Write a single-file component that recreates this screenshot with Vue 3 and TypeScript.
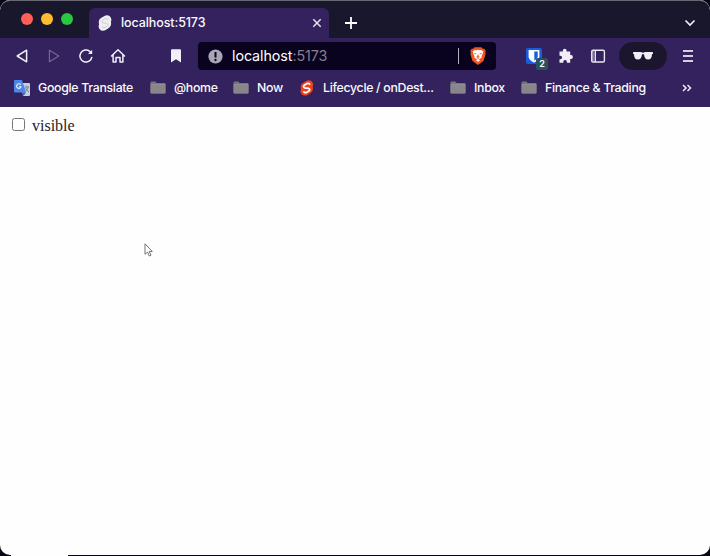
<script setup lang="ts">
import { ref } from 'vue'

interface Bookmark {
  label: string
  icon: 'translate' | 'folder' | 'svelte'
  width: number
}

const visible = ref(false)

const bookmarks: Bookmark[] = [
  { label: 'Google Translate', icon: 'translate', width: 95 },
  { label: '@home', icon: 'folder', width: 42 },
  { label: 'Now', icon: 'folder', width: 25 },
  { label: 'Lifecycle / onDest...', icon: 'svelte', width: 110 },
  { label: 'Inbox', icon: 'folder', width: 30 },
  { label: 'Finance & Trading', icon: 'folder', width: 102 },
]
</script>

<template>
  <div class="desktop">
    <div class="window">
      <header class="tabstrip">
        <div class="lights">
          <i class="light red"></i>
          <i class="light yellow"></i>
          <i class="light green"></i>
        </div>
        <div class="tab">
          <svg class="favicon" width="14" height="16" viewBox="0 0 14 16">
            <path d="M6 1.2C8.500-.5 11.500.2 12.700 2.400C13.700 4 13.500 5.400 12.900 6.600C13.500 9.500 12.900 11.600 10.800 13L7.700 15C5.300 16.400 2.500 15.600 1.200 13.400C.4 12 .4 10.700 1.100 9.400C.3 6.800 1 4.400 3 3.100Z" fill="#eeedf1" />
            <path d="M10.200 4.900C9.500 3.300 7.900 3.200 6.800 3.900L4.600 5.300C3.300 6.200 3.500 7.600 4.900 7.900L8.700 8.500C10.200 8.900 10.300 10.300 9.100 11.100L7 12.400C5.700 13.200 4.300 12.700 3.800 11.300" fill="none" stroke="#cfccd6" stroke-width="1" />
          </svg>
          <span class="tab-title">localhost:5173</span>
          <svg class="close" width="10" height="10" viewBox="0 0 10 10"><path d="M1.300 1.300L8.700 8.700M8.700 1.300L1.300 8.700" stroke="#e5e2ee" stroke-width="1.500" /></svg>
        </div>
        <svg class="plus" width="12" height="12" viewBox="0 0 12 12"><path d="M6 0V12M0 6H12" stroke="#fff" stroke-width="1.800" /></svg>
        <svg class="chevron" width="12" height="8" viewBox="0 0 12 8"><path d="M1.500 1.500L6 6L10.500 1.500" fill="none" stroke="#f0eff4" stroke-width="1.700" /></svg>
      </header>

      <nav class="toolbar">
        <span class="tool"><svg width="16" height="16" viewBox="0 0 16 16"><path d="M12.600 2.200V13.800L3.200 8Z" fill="none" stroke="#f1eef8" stroke-width="1.500" stroke-linejoin="round" /></svg></span>
        <span class="tool"><svg width="16" height="16" viewBox="0 0 16 16"><path d="M3.400 2.200V13.800L12.800 8Z" fill="none" stroke="#75688f" stroke-width="1.200" stroke-linejoin="round" /></svg></span>
        <span class="tool"><svg width="16" height="16" viewBox="0 0 16 16"><path d="M13.900 8.800A6 6 0 1 1 11.700 3.300L13.200 4.700" fill="none" stroke="#f1eef8" stroke-width="1.500" /><path d="M14.200 1.800V6H10Z" fill="#f1eef8" /></svg></span>
        <span class="tool"><svg width="16" height="16" viewBox="0 0 16 16"><path d="M1.500 8L8 1.800L14.500 8M3.100 6.700V13.900H6V9.400H10V13.900H12.900V6.700" fill="none" stroke="#f1eef8" stroke-width="1.500" stroke-linejoin="round" stroke-linecap="round" /></svg></span>
        <span class="tool save"><svg width="16" height="16" viewBox="0 0 16 16"><path d="M3 2.300Q3 1.300 4 1.300H12Q13 1.300 13 2.300V14.500L8 11.300L3 14.500Z" fill="#f1eef8" /></svg></span>
        <div class="address">
          <svg class="info" width="15" height="15" viewBox="0 0 15 15"><circle cx="7.500" cy="7.500" r="7.100" fill="#a9a5b5" /><path d="M7.500 3V8.500" stroke="#090320" stroke-width="2" /><circle cx="7.500" cy="11" r="1.150" fill="#090320" /></svg>
          <span class="url">localhost<span class="port">:5173</span></span>
          <i class="divider"></i>
          <svg class="brave" width="16" height="18" viewBox="0 0 16 18">
            <path d="M4.700.2H11.300L12.800 1.800L14.300 1.700L15.800 4L15.200 5.500L15.600 7L13.500 14L8 17.900L2.500 14L.4 7L.8 5.500L.2 4L1.700 1.700L3.200 1.800Z" fill="#f2541e" />
            <path d="M2.800 4.500L4.700 2.900L6.400 3.200L8 2.700L9.600 3.200L11.300 2.900L13.200 4.500L12.800 6.600L11.500 9.200L11.800 10.600L9.500 12.100L8 11.300L6.500 12.100L4.200 10.600L4.500 9.200L3.200 6.600ZM5.800 13L8 12L10.200 13L8 15Z" fill="#fff" />
            <path d="M4 5.900L6.700 6.500L6.100 7.300L4.800 7.200ZM12 5.900L9.300 6.500L9.900 7.300L11.200 7.200ZM7.400 7L7.100 9.200L6 10.100L8 11L10 10.100L8.900 9.200L8.600 7L8 9Z" fill="#ef6333" />
          </svg>
        </div>
        <span class="tool vault">
          <svg width="16" height="16" viewBox="0 0 16 16"><rect width="16" height="16" rx="2" fill="#175ddc" /><path d="M2.600 2H13.400V8.500C13.400 11.300 10.600 13.200 8 14.500C5.400 13.200 2.600 11.300 2.600 8.500Z" fill="#fff" /><path d="M8.300 3.600H11.700V8.400C11.700 10.200 10 11.500 8.300 12.500Z" fill="#175ddc" /></svg>
          <b class="count">2</b>
        </span>
        <span class="tool"><svg width="16" height="16" viewBox="0 0 16 16"><path d="M1.500 3.500H4.800V2.700A1.900 1.900 0 0 1 8.600 2.700V3.500H12.200V7.100H13A1.900 1.900 0 0 1 13 10.900H12.200V14.700H8.900V13.800A1.800 1.800 0 0 0 5.300 13.800V14.700H1.500V11.300H2.300A1.800 1.800 0 0 0 2.300 7.700H1.500Z" fill="#f1eef8" /></svg></span>
        <span class="tool"><svg width="16" height="16" viewBox="0 0 16 16"><rect x="1.700" y="2.300" width="12.700" height="11.700" rx="1.300" fill="none" stroke="#eae6f0" stroke-width="1.400" /><path d="M2 2.700H5.200V13.500H2Z" fill="#eae6f0" fill-opacity=".4" /><path d="M5.500 2.500V13.800" stroke="#eae6f0" /></svg></span>
        <span class="private"><svg width="20" height="8" viewBox="0 0 20 8"><path d="M0 .2L1.500.1H7.800L10 .7L12.200.1H18.500L20 .2V1.700L19 2.200C18.900 5.600 17.800 7.500 15.100 7.500C12.500 7.500 11.400 5.500 11 2.400C10.600 1.700 9.400 1.700 9 2.400C8.600 5.500 7.500 7.500 4.900 7.500C2.200 7.500 1.100 5.600 1 2.200L0 1.700Z" fill="#f1eef8" /></svg></span>
        <span class="tool menu"><svg width="12" height="14" viewBox="0 0 12 14"><path d="M1 2H11M1 7H11M1 12H11" stroke="#d4cfdf" stroke-width="1.800" /></svg></span>
      </nav>

      <nav class="bookmarks">
        <span v-for="item in bookmarks" :key="item.label" class="bookmark">
          <svg v-if="item.icon === 'translate'" width="16" height="16" viewBox="0 0 16 16"><path d="M7 3H15Q16 3 16 4V15Q16 16 15 16H9Z" fill="#c9ced9" /><path d="M1 0H8L12 12.600H1Q0 12.600 0 11.600V1Q0 0 1 0Z" fill="#4b86e8" /><path d="M8.500 12.600H12L9.500 16Z" fill="#2f62bd" /><path d="M6.800 4.800A2.300 2.300 0 1 0 7.100 6.700H4.900" fill="none" stroke="#e8f1ff" stroke-width="1.100" /><path d="M10.500 7H15M12.800 5.800V7M14.300 7Q13.700 9.500 11.500 11.200M11.500 8Q12.400 10.200 15 12" fill="none" stroke="#78849a" /></svg>
          <svg v-else-if="item.icon === 'folder'" width="16" height="16" viewBox="0 0 16 16"><path d="M.5 2.600Q.5 1.600 1.500 1.600H5.300L6.700 2.900H14.500Q15.500 2.900 15.500 3.900V12.600Q15.500 13.600 14.500 13.600H1.500Q.5 13.600 .5 12.600Z" fill="#777579" /><path d="M.5 4.500H15.500V12.600Q15.500 13.600 14.500 13.600H1.500Q.5 13.600 .5 12.600Z" fill="#88868a" /><path d="M.7 4.500H15.300" stroke="#98959a" stroke-width=".7" /></svg>
          <svg v-else width="16" height="16" viewBox="0 0 16 16"><path d="M6.800 1.200C9.200-.4 12.200.1 13.500 2.300C14.400 3.800 14.300 5.300 13.700 6.600C14.400 9.300 13.700 11.500 11.600 12.900L8.500 14.900C6.100 16.300 3.300 15.500 2.100 13.300C1.300 11.900 1.300 10.600 2 9.300C1.200 6.700 1.900 4.300 3.900 3Z" fill="#ee421c" /><path d="M11 4.800C10.400 3.200 8.700 3.100 7.600 3.800L5.400 5.200C4.100 6.100 4.300 7.500 5.700 7.800L9.500 8.400C11 8.800 11.100 10.200 9.900 11L7.800 12.300C6.500 13.100 5.100 12.600 4.600 11.200" fill="none" stroke="#fff" stroke-width="1.700" /></svg>
          <span class="label" :style="{ width: `${item.width}px` }">{{ item.label }}</span>
        </span>
        <svg class="more" width="10" height="8" viewBox="0 0 10 8"><path d="M1 1L4 4L1 7M5.500 1L8.500 4L5.500 7" fill="none" stroke="#eeeaf6" stroke-width="1.500" /></svg>
      </nav>

      <main class="page">
        <label class="option"><input v-model="visible" type="checkbox" /><span>visible</span></label>
      </main>
    </div>
    <svg class="cursor" width="10" height="16" viewBox="0 0 10 16"><path d="M1 .8V11.300L3.500 9.100L5.300 13L7 12.200L5.200 8.500H8.300Z" fill="#fff" stroke="#65636d" stroke-width=".9" /></svg>
    <i class="dock-gap"></i>
  </div>
</template>

<style>
body { margin: 0; overflow: hidden; background: #080612; }
</style>

<style scoped>
.desktop { position: relative; width: 710px; height: 556px; background: #080612; overflow: hidden; }
.window { box-sizing: border-box; height: 555px; border-radius: 10px; overflow: hidden; background: #fefefe; display: flex; flex-direction: column; font-family: Inter, "Liberation Sans", sans-serif; }
svg { display: block; flex: none; }
.tabstrip { box-sizing: border-box; height: 38px; flex: none; display: flex; align-items: center; background: #19172c; border-top: 1px solid #676672; border-radius: 10px 10px 0 0; }
.lights { display: flex; gap: 8px; padding: 0 0 1px 21px; width: 68px; }
.light { width: 12px; height: 12px; border-radius: 50%; }
.red { background: #ff5f57; }
.yellow { background: #febc2e; }
.green { background: #28c840; }
.tab { box-sizing: border-box; width: 240px; height: 30px; align-self: flex-end; display: flex; align-items: center; padding: 0 7px 0 9px; border-radius: 6px 6px 0 0; background: #34225f; }
.tab-title { margin: 0 0 1px 9px; color: #f9f8fc; font-size: 12.5px; font-weight: 500; letter-spacing: -.1px; }
.close { margin-left: auto; }
.plus { margin: 7px 0 0 16px; }
.chevron { margin: 7px 14px 0 auto; }
.toolbar { box-sizing: border-box; height: 37px; flex: none; display: flex; align-items: center; padding: 0 0 1px 6px; background: #34225f; }
.tool { width: 32px; height: 28px; flex: none; display: flex; align-items: center; justify-content: center; }
.save { margin-left: 26px; }
.address { box-sizing: border-box; margin-left: 6px; width: 298px; height: 28px; flex: none; display: flex; align-items: center; padding: 0 10px; border-radius: 4px; background: #090320; }
.url { margin: 0 0 2px 9px; color: #fff; font-size: 14.3px; letter-spacing: -.08px; }
.port { color: #84808f; }
.divider { width: 1px; height: 16px; margin-left: auto; background: #b5b1bd; }
.brave { margin-left: 11px; }
.vault { position: relative; margin-left: 22px; }
.count { position: absolute; left: 18px; top: 16px; width: 12px; height: 12px; border-radius: 2px; background: #2b505f; color: #fff; font-size: 9px; line-height: 12px; text-align: center; font-weight: 600; }
.private { width: 48px; height: 28px; flex: none; margin-left: 5px; display: flex; align-items: center; justify-content: center; border-radius: 14px; background: #1b162e; }
.menu { margin-left: 5px; }
.bookmarks { box-sizing: border-box; height: 32px; flex: none; display: flex; align-items: center; gap: 17px; padding: 0 18px 6px 14px; background: #34225f; }
.bookmark { display: flex; align-items: center; gap: 8px; flex: none; }
.label { font-size: 12.3px; line-height: 16px; white-space: nowrap; color: #faf9fc; font-weight: 500; letter-spacing: -.29px; }
.more { margin-left: auto; }
.page { flex: 1; padding: 9px 12px; }
.option { display: flex; align-items: center; width: max-content; color: #22212a; font: 16px/20px "Liberation Serif", serif; }
.option input { width: 13px; height: 13px; margin: 0 7px 4px 0; }
.cursor { position: absolute; left: 144px; top: 243px; }
.dock-gap { position: absolute; left: 11px; bottom: 0; width: 57px; height: 2px; background: #fefefe; }
</style>
